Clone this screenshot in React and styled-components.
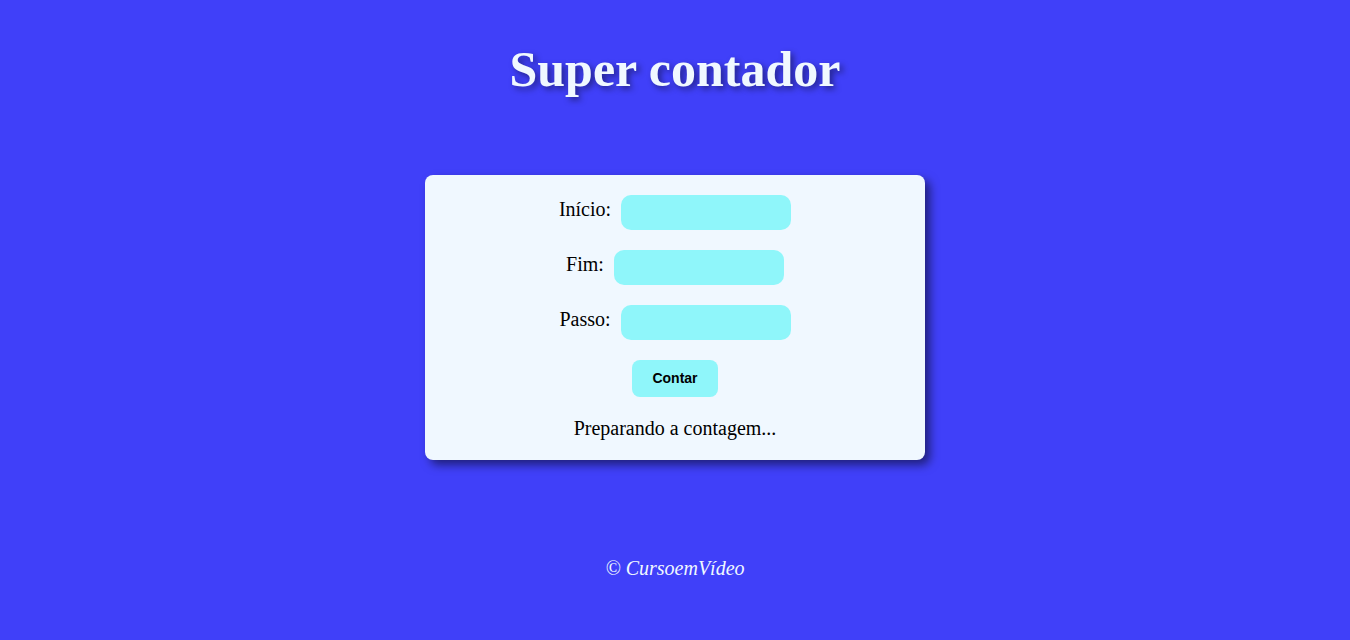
import React, { useState } from 'react';
import styled, { createGlobalStyle } from 'styled-components';

const GlobalStyle = createGlobalStyle`
  body {
    margin: 0;
    background-color: #4040f9;
    font-family: 'Liberation Serif', 'Times New Roman', serif;
  }
`;

const Page = styled.div`
  display: flex;
  flex-direction: column;
  align-items: center;
  min-height: 640px;
`;

const Title = styled.h1`
  margin: 41px 0 76px;
  font-size: 50px;
  font-weight: 700;
  line-height: 1.15;
  color: aliceblue;
  text-shadow: 3px 3px 6px rgba(0, 0, 0, 0.45);
`;

const Card = styled.section`
  box-sizing: border-box;
  width: 500px;
  padding: 20px;
  display: flex;
  flex-direction: column;
  align-items: center;
  gap: 20px;
  background-color: aliceblue;
  border-radius: 8px;
  box-shadow: 5px 5px 10px rgba(0, 0, 0, 0.5);
`;

const Row = styled.div`
  display: flex;
  align-items: center;
  justify-content: center;
  gap: 10px;
  font-size: 20px;
  line-height: 23px;
  color: black;
`;

const Label = styled.label`
  padding-bottom: 5px;
`;

const Field = styled.input`
  box-sizing: border-box;
  width: 170px;
  height: 35px;
  border: none;
  border-radius: 10px;
  background-color: #8ff6fa;
  outline: none;
`;

const Button = styled.button`
  height: 37px;
  padding: 0 20px;
  border: none;
  border-radius: 8px;
  background-color: #8ff6fa;
  font-family: 'Liberation Sans', Arial, sans-serif;
  font-size: 14px;
  font-weight: 700;
  color: black;
  cursor: pointer;
`;

const Result = styled.div`
  font-size: 20px;
  line-height: 23px;
  color: black;
`;

const Footer = styled.footer`
  margin-top: 97px;
  font-size: 20px;
  line-height: 23px;
  font-style: italic;
  color: aliceblue;
`;

const fields = [
    { label: 'Início:', name: 'inicio' },
    { label: 'Fim:', name: 'fim' },
    { label: 'Passo:', name: 'passo' },
];

const App = () => {
    const [values, setValues] = useState({ inicio: '', fim: '', passo: '' });
    const [result, setResult] = useState('Preparando a contagem...');

    const contar = () => {
        const ini = Number(values.inicio);
        const fim = Number(values.fim);
        const passo = Number(values.passo) || 1;
        if (values.inicio === '' || values.fim === '') {
            setResult('Impossível contar!');
            return;
        }
        const out = [];
        if (ini <= fim) {
            for (let c = ini; c <= fim; c += passo) out.push(c);
        } else {
            for (let c = ini; c >= fim; c -= passo) out.push(c);
        }
        setResult('Contando: ' + out.join(' 👉 ') + ' 🏁');
    };

    return (
        <Page>
            <GlobalStyle />
            <Title>Super contador</Title>
            <Card>
                {fields.map((f) => (
                    <Row key={f.name}>
                        <Label htmlFor={f.name}>{f.label}</Label>
                        <Field
                            type="number"
                            id={f.name}
                            value={values[f.name]}
                            onChange={(e) => setValues({ ...values, [f.name]: e.target.value })}
                        />
                    </Row>
                ))}
                <Button onClick={contar}>Contar</Button>
                <Result>{result}</Result>
            </Card>
            <Footer>&copy; CursoemVídeo</Footer>
        </Page>
    );
};

export default App;
